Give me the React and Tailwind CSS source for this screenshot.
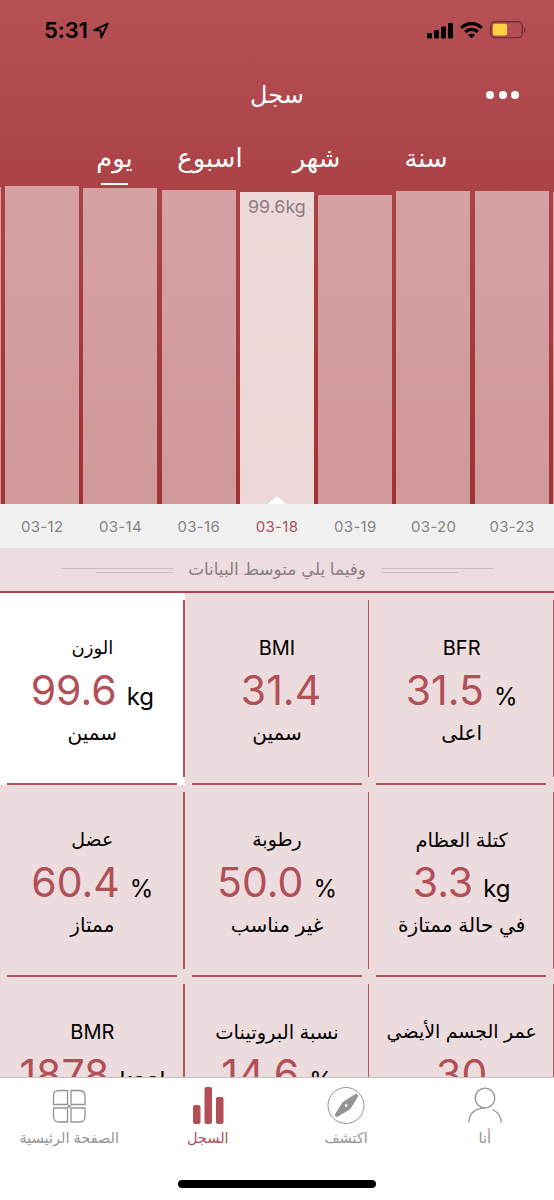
const bars = [
  { date: "03-12", h: "h-[318px]" },
  { date: "03-14", h: "h-[316px]" },
  { date: "03-16", h: "h-[314.5px]" },
  { date: "03-18", h: "h-[312.5px]", active: true, label: "99.6kg" },
  { date: "03-19", h: "h-[309.5px]" },
  { date: "03-20", h: "h-[313.5px]" },
  { date: "03-23", h: "h-[313px]" },
];

const metrics = [
  { name: "الوزن", value: "99.6", unit: "kg", status: "سمين", active: true, nameSize: "text-[18px]" },
  { name: "BMI", value: "31.4", status: "سمين", nameSize: "text-[20px]", shift: "pl-[8px]" },
  { name: "BFR", value: "31.5", unit: "%", status: "اعلى", nameSize: "text-[20px]" },
  { name: "عضل", value: "60.4", unit: "%", status: "ممتاز", nameSize: "text-[19px]" },
  { name: "رطوبة", value: "50.0", unit: "%", status: "غير مناسب", nameSize: "text-[19px]" },
  { name: "كتلة العظام", value: "3.3", unit: "kg", status: "في حالة ممتازة", nameSize: "text-[19.5px]" },
  { name: "BMR", value: "1878", unit: "kcal", status: "", nameSize: "text-[20px]" },
  { name: "نسبة البروتينات", value: "14.6", unit: "%", status: "", nameSize: "text-[19.5px]" },
  { name: "عمر الجسم الأيضي", value: "30", status: "", nameSize: "text-[19px]" },
];

function StatusBar() {
  return (
    <div className="flex h-[60px] shrink-0 items-center justify-between pl-[44px] pr-[28px] text-black">
      <div className="flex items-center gap-[5px]">
        <span className="text-[22px] font-semibold leading-none tracking-[-0.1px]">5:31</span>
        <svg width="16" height="17" viewBox="0 0 16 17" fill="none" stroke="currentColor" strokeWidth="1.9" strokeLinejoin="round">
          <path d="M14.800 1.600 1.300 8l6.300.500.700 6.800z" />
        </svg>
      </div>
      <div className="flex items-center">
        <svg width="26" height="17" viewBox="0 0 26 17" fill="currentColor">
          <rect x="0" y="11" width="5" height="5.500" rx="1.200" />
          <rect x="7" y="8" width="5" height="8.500" rx="1.200" />
          <rect x="14" y="4.500" width="5" height="12" rx="1.200" />
          <rect x="21" y="1" width="5" height="15.500" rx="1.200" />
        </svg>
        <svg className="ml-[7px]" width="23" height="17" viewBox="0 0 23 17" fill="none" stroke="currentColor" strokeWidth="3.200">
          <path d="M1.200 5.900a14.500 14.500 0 0 1 20.600 0" />
          <path d="M5.200 10a8.900 8.900 0 0 1 12.600 0" />
          <path d="M11.500 16.300 8 13.100a5 5 0 0 1 7 0z" fill="currentColor" stroke="none" />
        </svg>
        <svg className="ml-[7px]" width="36" height="18" viewBox="0 0 36 18" fill="none">
          <rect x="0.800" y="0.800" width="31.500" height="15.800" rx="4" stroke="#752f34" strokeWidth="1.400" />
          <rect x="2.800" y="2.800" width="14.200" height="11.800" rx="1.800" fill="#fccf45" />
          <path d="M34 6.200c2 .900 2 4.500 0 5.400z" fill="#752f34" />
        </svg>
      </div>
    </div>
  );
}

function Bar({ h, active, label }) {
  return (
    <div className={`relative w-[74px] shrink-0 text-center ${h} ${active ? "bg-white/80" : "bg-white/50"}`}>
      {label && <span className="block pt-[4px] text-[17.800px] leading-[22px] text-[#8b7f80]">{label}</span>}
      {active && (
        <svg className="absolute bottom-0 left-[28px]" width="18" height="8" viewBox="0 0 18 8">
          <path d="M0 8 7.500 1q1.500-1 3 0L18 8z" fill="#fff" />
        </svg>
      )}
    </div>
  );
}

function Rules({ flip }) {
  return (
    <div className={`flex w-[112px] flex-col gap-[3px] pt-[2px] ${flip ? "items-start" : "items-end"}`}>
      <div className="h-[1.500px] w-full bg-[#cfbec0]" />
      <div className="h-px w-[77px] bg-[#cfbec0]" />
    </div>
  );
}

function Metric({ name, value, unit, status, active, nameSize, shift = "" }) {
  return (
    <div className={`relative flex h-[192px] flex-col items-center pt-[38px] ${active ? "bg-white" : "bg-[#eddcde]"}`}>
      <div className={`h-[34px] pt-[0.500px] leading-[34px] text-black whitespace-nowrap ${nameSize}`} dir="auto">{name}</div>
      <div className={`flex h-[51px] items-baseline gap-[10px] leading-[50px] ${shift}`}>
        <span className="text-[41px] text-[#b24f57]">{value}</span>
        {unit && <span className="text-[24px] text-black">{unit}</span>}
      </div>
      <div className="h-[34px] text-[20px] leading-[34px] text-black whitespace-nowrap" dir="auto">{status}</div>
      <div className="absolute top-[7px] right-0 h-[177px] w-[1.500px] bg-[#b4545c]" />
      <div className="absolute bottom-0 left-[7px] h-[1.500px] w-[170px] bg-[#b4545c]" />
    </div>
  );
}

function Tab({ label, active, children }) {
  return (
    <div className={`flex w-1/4 flex-col items-center ${active ? "text-[#b24f57]" : "text-[#949494]"}`}>
      <svg width="40" height="40" viewBox="0 0 40 40" fill="none" stroke="currentColor" strokeWidth="1.300">
        {children}
      </svg>
      <span className="mt-[2px] text-[14.500px] leading-[20px] whitespace-nowrap" dir="rtl">{label}</span>
    </div>
  );
}

export default function App() {
  return (
    <div className="flex h-[1200px] w-[554px] flex-col overflow-hidden bg-white font-['Inter','DejaVu_Sans',sans-serif]">
      <div className="flex h-[504px] shrink-0 flex-col bg-linear-to-b from-[#b55054] via-[#aa4246] via-38% to-[#a03235]">
        <StatusBar />
        <header className="relative flex h-[69px] shrink-0 items-center justify-center text-white">
          <h1 className="text-[24px] leading-[36px]" dir="rtl">سجل</h1>
          <div className="absolute right-[35px] flex gap-[4.500px]">
            <i className="size-[8px] rounded-full bg-white" />
            <i className="size-[8px] rounded-full bg-white" />
            <i className="size-[8px] rounded-full bg-white" />
          </div>
        </header>
        <nav className="flex h-[56px] shrink-0 pt-[12px] pl-[67px] text-[25.800px] leading-[34px] text-white">
          <div className="flex w-[95px] flex-col items-center">
            <span dir="rtl">يوم</span>
            <div className="mt-[8px] h-[1.500px] w-[27px] shrink-0 bg-white" />
          </div>
          <div className="w-[96px] text-center" dir="rtl">اسبوع</div>
          <div className="w-[117px] text-center" dir="rtl">شهر</div>
          <div className="w-[102px] text-center" dir="rtl">سنة</div>
        </nav>
        <div className="flex flex-1 items-end gap-[4.300px] overflow-hidden">
          <div className="h-[317px] w-[0.700px] shrink-0 bg-white/50" />
          {bars.map((b) => (
            <Bar key={b.date} {...b} />
          ))}
          <div className="h-[312px] w-[4px] shrink-0 bg-white/50" />
        </div>
      </div>
      <div className="flex h-[44px] shrink-0 items-center bg-[#f1f1f1] pt-[2px] pl-[3px]">
        {bars.map((b) => (
          <span key={b.date} className={`w-[78.300px] shrink-0 text-center text-[15px] tracking-[0.300px] ${b.active ? "text-[#b24f57]" : "text-[#858585]"}`}>{b.date}</span>
        ))}
      </div>
      <div className="flex h-[43px] shrink-0 items-center justify-center gap-[15px] bg-[#eedde0]">
        <Rules />
        <span className="pb-[2px] text-[16.800px] leading-[26px] text-[#8a7f81]" dir="rtl">وفيما يلي متوسط البيانات</span>
        <Rules flip />
      </div>
      <div className="h-[1.500px] shrink-0 bg-[#ae444d]" />
      <main className="grid min-h-0 flex-1 grid-cols-3 content-start overflow-hidden bg-[#eddcde]">
        {metrics.map((m) => (
          <Metric key={m.name} {...m} />
        ))}
      </main>
      <footer className="flex h-[123px] shrink-0 flex-col items-center border-t border-[#c9c3c4] bg-white">
        <div className="flex h-[102px] w-full pt-[8px]">
          <Tab label="الصفحة الرئيسية">
            <path d="M10 4.500h8.500v14H4.500v-8.500q0-5.500 5.500-5.500zM22 4.500h8.500q5.500 0 5.500 5.500v8.500H22zM4.500 22h14v14H10q-5.500 0-5.500-5.500zM22 22h14v8.500q0 5.500-5.500 5.500H22z" />
            <circle cx="20.200" cy="20.200" r="1.500" fill="currentColor" stroke="none" />
          </Tab>
          <Tab label="السجل" active>
            <rect x="5" y="19" width="7.500" height="19" rx="2" fill="currentColor" stroke="none" />
            <rect x="16.500" y="1" width="7.500" height="37" rx="2" fill="currentColor" stroke="none" />
            <rect x="28" y="11" width="7.500" height="27" rx="2" fill="currentColor" stroke="none" />
          </Tab>
          <Tab label="اكتشف">
            <circle cx="20" cy="19.500" r="18" strokeWidth="1" />
            <path fillRule="evenodd" d="M31.500 8.300c.8.900.7 2-.1 3.200l-6.200 10.200a8 8 0 0 1-3 2.700L11.500 30.700c-1.300.8-3.400-.9-2.500-2.400l6.500-10.600a8 8 0 0 1 2.800-2.700L29 8.200c1-.7 1.800-.6 2.500.1zM20.200 18.200a1.300 1.300 0 1 0 0 2.600 1.300 1.300 0 0 0 0-2.600z" fill="currentColor" stroke="none" />
          </Tab>
          <Tab label="أنا">
            <circle cx="20" cy="12" r="9.800" />
            <path d="M3.800 36.500C4.200 27 11 21.800 20 21.800M27.500 23.500c5.500 2.500 8.500 7 8.800 13" />
          </Tab>
        </div>
        <div className="h-[8px] w-[198px] rounded-full bg-black" />
      </footer>
    </div>
  );
}
